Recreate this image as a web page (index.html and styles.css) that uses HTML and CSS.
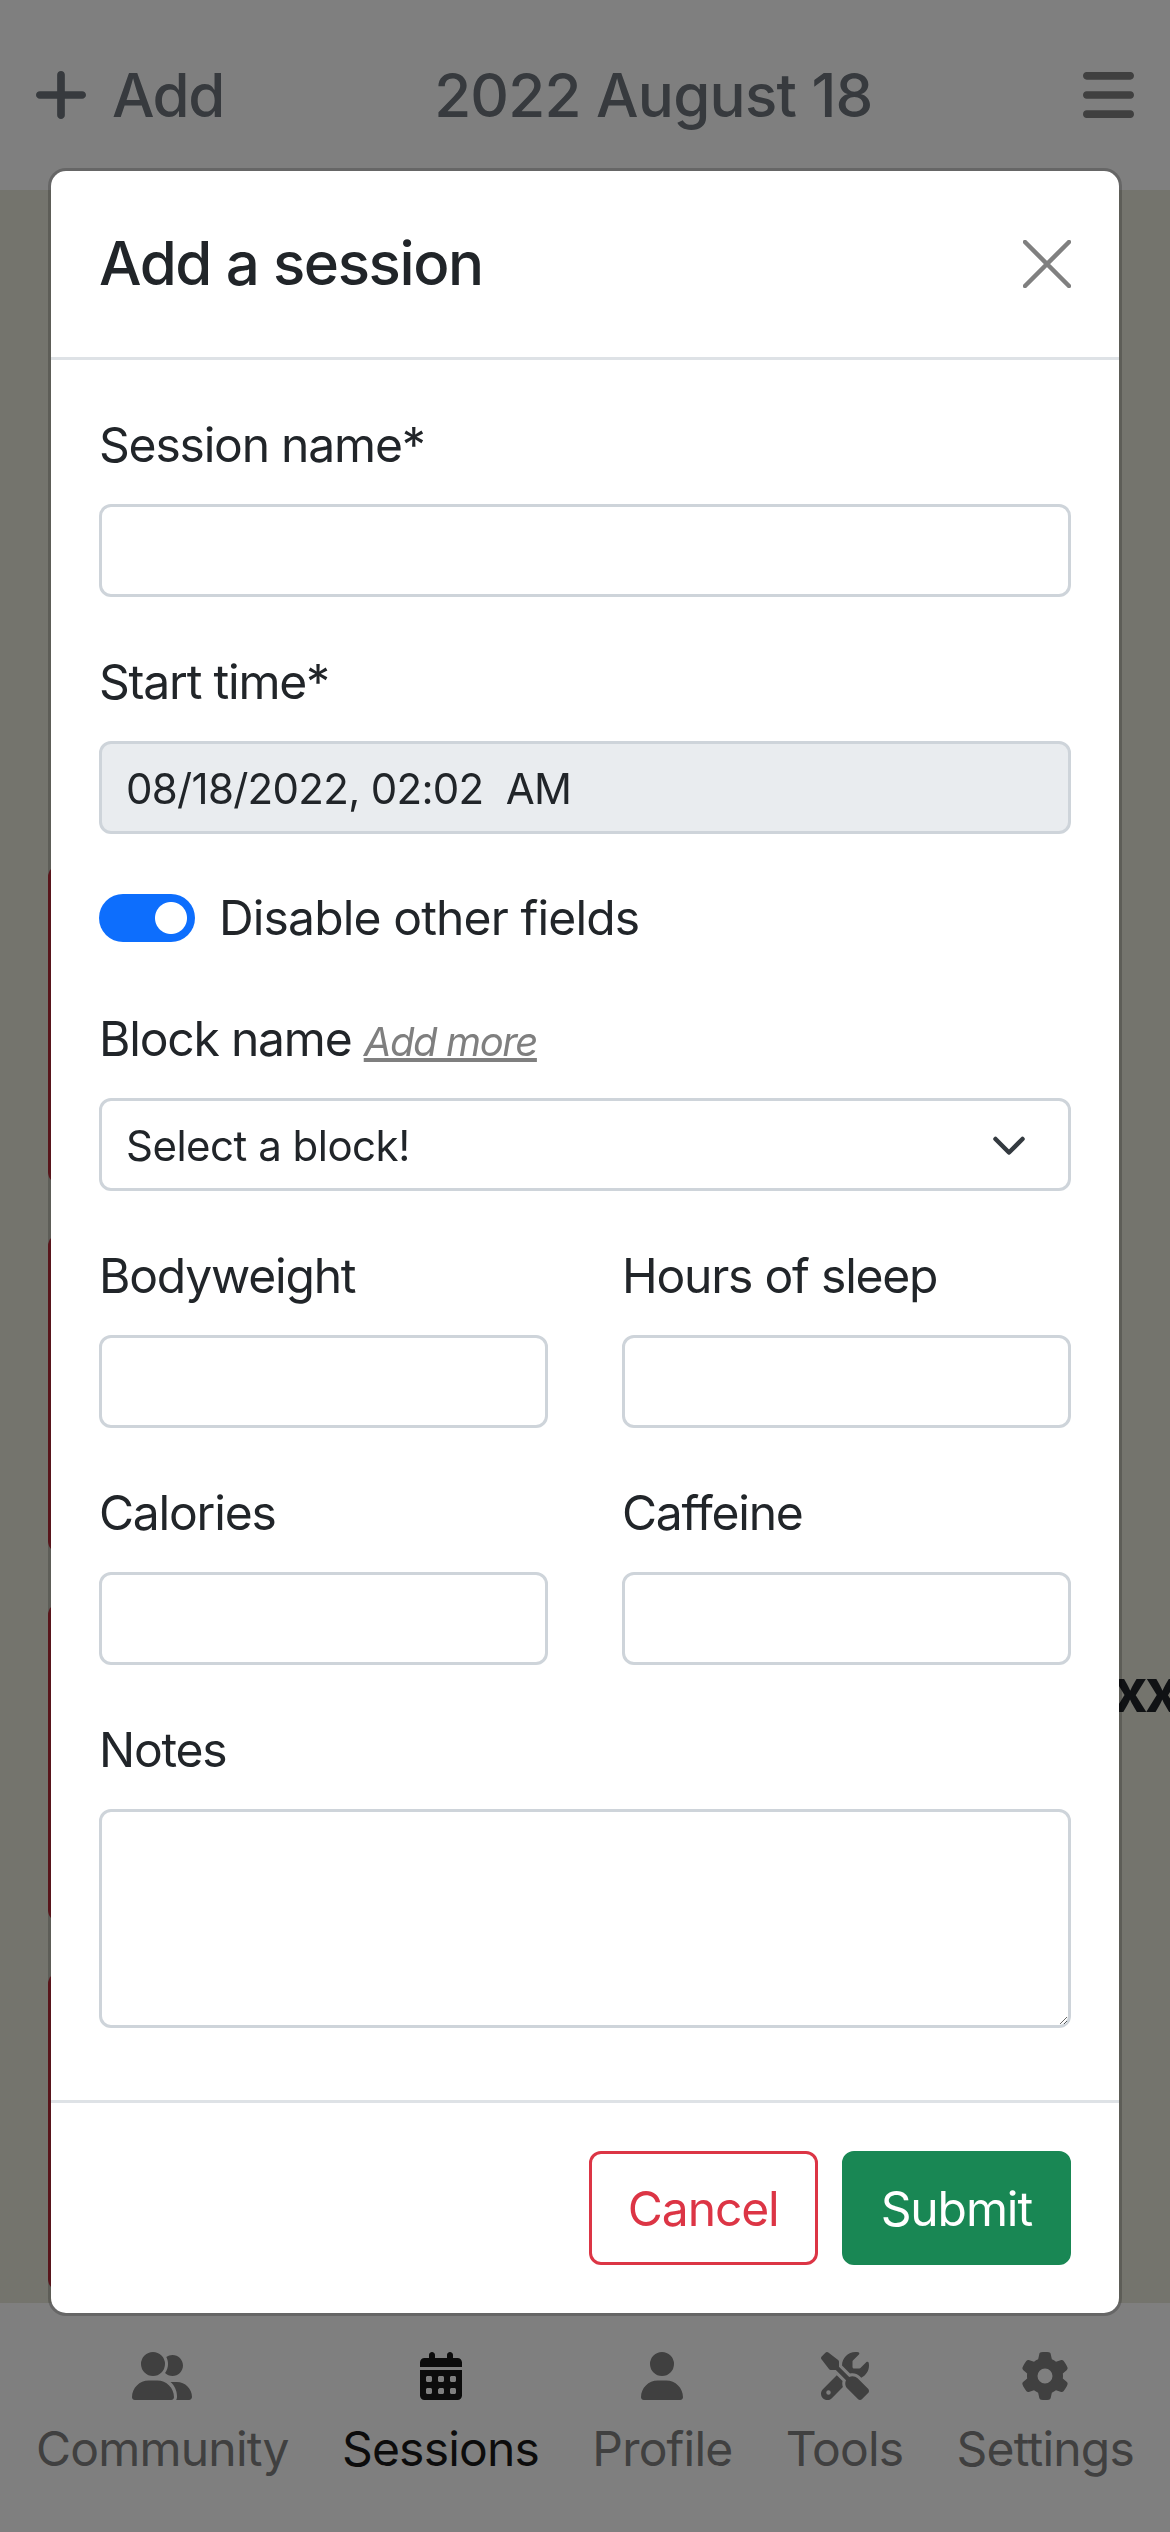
FILE: index.html
```html
<!DOCTYPE html>
<html lang="en">
<head>
<meta charset="utf-8">
<title>Add a session</title>
<link rel="stylesheet" href="styles.css">
</head>
<body>
<div class="app">
  <header class="topbar">
    <div class="add">
      <svg class="add-icon" viewBox="16 48 416 416" preserveAspectRatio="none"><path d="M256 80c0-17.7-14.3-32-32-32s-32 14.3-32 32V224H48c-17.7 0-32 14.3-32 32s14.3 32 32 32H192V432c0 17.7 14.3 32 32 32s32-14.3 32-32V288H400c17.7 0 32-14.3 32-32s-14.3-32-32-32H256V80z"/></svg>
      <span>Add</span>
    </div>
    <div class="date">2022 August 18</div>
    <svg class="menu-icon" viewBox="0 64 448 384" preserveAspectRatio="none"><path d="M0 96C0 78.3 14.3 64 32 64H416c17.7 0 32 14.3 32 32s-14.3 32-32 32H32C14.3 128 0 113.7 0 96zM0 256c0-17.7 14.3-32 32-32H416c17.7 0 32 14.3 32 32s-14.3 32-32 32H32c-17.7 0-32-14.3-32-32zM448 416c0 17.7-14.3 32-32 32H32c-17.7 0-32-14.3-32-32s14.3-32 32-32H416c17.7 0 32 14.3 32 32z"/></svg>
  </header>

  <main class="sessions">
    <article class="card"></article>
    <article class="card"></article>
    <article class="card"><p class="card-title">xxxxxxxxxxxxxxxxxxxxxxxxxxxxxxxxxxxxxxxxxxxxxxxxxx</p></article>
    <article class="card"></article>
  </main>

  <nav class="tabs">
    <div class="tab">
      <svg class="tab-icon" viewBox="0 0 640 512"><path d="M96 128a128 128 0 1 1 256 0A128 128 0 1 1 96 128zM0 482.3C0 383.8 79.8 304 178.3 304h91.4C368.2 304 448 383.8 448 482.3c0 16.4-13.3 29.7-29.7 29.7H29.7C13.3 512 0 498.7 0 482.3zM609.3 512H471.4c5.4-9.4 8.6-20.3 8.6-32v-8c0-60.7-27.1-115.2-69.8-151.8c2.4-.1 4.7-.2 7.1-.2h61.4C567.8 320 640 392.2 640 481.3c0 17-13.8 30.7-30.7 30.7zM432 256c-31 0-59-12.6-79.3-32.9C372.4 196.5 384 163.6 384 128c0-26.8-6.6-52.1-18.3-74.3C384.3 40.1 407.2 32 432 32c61.9 0 112 50.1 112 112s-50.1 112-112 112z"/></svg>
      <span>Community</span>
    </div>
    <div class="tab tab-active">
      <svg class="tab-icon" viewBox="0 0 448 512"><path d="M128 0c17.7 0 32 14.3 32 32V64H288V32c0-17.7 14.3-32 32-32s32 14.3 32 32V64h48c26.5 0 48 21.5 48 48v48H0V112C0 85.5 21.5 64 48 64H96V32c0-17.7 14.3-32 32-32zM0 192H448V464c0 26.5-21.5 48-48 48H48c-26.5 0-48-21.5-48-48V192zm64 80v32c0 8.8 7.2 16 16 16h32c8.8 0 16-7.2 16-16V272c0-8.8-7.2-16-16-16H80c-8.8 0-16 7.2-16 16zm128 0v32c0 8.8 7.2 16 16 16h32c8.8 0 16-7.2 16-16V272c0-8.8-7.2-16-16-16H208c-8.8 0-16 7.2-16 16zm144-16c-8.8 0-16 7.2-16 16v32c0 8.8 7.2 16 16 16h32c8.8 0 16-7.2 16-16V272c0-8.8-7.2-16-16-16H336zM64 400v32c0 8.8 7.2 16 16 16h32c8.8 0 16-7.2 16-16V400c0-8.8-7.2-16-16-16H80c-8.8 0-16 7.2-16 16zm144-16c-8.8 0-16 7.2-16 16v32c0 8.8 7.2 16 16 16h32c8.8 0 16-7.2 16-16V400c0-8.8-7.2-16-16-16H208c-8.8 0-16 7.2-16 16zm112 16v32c0 8.8 7.2 16 16 16h32c8.8 0 16-7.2 16-16V400c0-8.8-7.2-16-16-16H336c-8.8 0-16 7.2-16 16z"/></svg>
      <span>Sessions</span>
    </div>
    <div class="tab">
      <svg class="tab-icon" viewBox="0 0 448 512"><path d="M224 256A128 128 0 1 0 224 0a128 128 0 1 0 0 256zm-45.7 48C79.8 304 0 383.8 0 482.3C0 498.7 13.3 512 29.7 512H418.3c16.4 0 29.7-13.3 29.7-29.7C448 383.8 368.2 304 269.7 304H178.3z"/></svg>
      <span>Profile</span>
    </div>
    <div class="tab">
      <svg class="tab-icon" viewBox="0 0 512 512"><path d="M78.6 5C69.1-2.4 55.6-1.5 47 7L7 47c-8.5 8.5-9.4 22-2.1 31.6l80 104c4.5 5.9 11.6 9.4 19 9.4h54.1l109 109c-14.7 29-10 65.4 14.3 89.6l112 112c12.5 12.5 32.8 12.5 45.3 0l64-64c12.5-12.5 12.5-32.8 0-45.3l-112-112c-24.2-24.2-60.6-29-89.6-14.3l-109-109V104c0-7.5-3.5-14.5-9.4-19L78.6 5zM19.9 396.1C7.2 408.8 0 426.1 0 444.1C0 481.6 30.4 512 67.9 512c18 0 35.3-7.2 48-19.9L233.7 374.3c-7.8-20.9-9-43.6-3.6-65.1l-61.7-61.7L19.9 396.1zM512 144c0-10.5-1.1-20.7-3.2-30.5c-2.4-11.2-16.1-14.1-24.2-6l-63.9 63.9c-3 3-7.1 4.7-11.3 4.7H352c-8.8 0-16-7.2-16-16V102.6c0-4.2 1.7-8.3 4.7-11.3l63.9-63.9c8.1-8.1 5.2-21.8-6-24.2C388.7 1.1 378.5 0 368 0C288.5 0 224 64.5 224 144l0 .8 85.3 85.3c36-9.1 75.8 .5 104 28.7L429 274.5c49-23 83-72.8 83-130.5zM56 432a24 24 0 1 1 48 0 24 24 0 1 1 -48 0z"/></svg>
      <span>Tools</span>
    </div>
    <div class="tab">
      <svg class="tab-icon" viewBox="0 0 512 512"><path d="M495.9 166.6c3.2 8.7 .5 18.4-6.4 24.6l-43.3 39.4c1.1 8.3 1.7 16.8 1.7 25.4s-.6 17.1-1.7 25.4l43.3 39.4c6.9 6.2 9.6 15.9 6.4 24.6c-4.4 11.9-9.7 23.3-15.8 34.3l-4.7 8.1c-6.6 11-14 21.4-22.1 31.2c-5.9 7.2-15.7 9.6-24.5 6.8l-55.7-17.7c-13.4 10.3-28.2 18.9-44 25.4l-12.5 57.1c-2 9.1-9 16.3-18.2 17.8c-13.8 2.3-28 3.5-42.5 3.5s-28.7-1.2-42.5-3.5c-9.2-1.5-16.2-8.7-18.2-17.8l-12.5-57.1c-15.8-6.5-30.6-15.1-44-25.4L83.1 425.9c-8.8 2.8-18.6 .3-24.5-6.8c-8.1-9.8-15.5-20.2-22.1-31.2l-4.7-8.1c-6.1-11-11.4-22.4-15.8-34.3c-3.2-8.7-.5-18.4 6.4-24.6l43.3-39.4C64.6 273.1 64 264.6 64 256s.6-17.1 1.7-25.4L22.4 191.2c-6.9-6.2-9.6-15.9-6.4-24.6c4.4-11.9 9.7-23.3 15.8-34.3l4.7-8.1c6.6-11 14-21.4 22.1-31.2c5.9-7.2 15.7-9.6 24.5-6.8l55.7 17.7c13.4-10.3 28.2-18.9 44-25.4l12.5-57.1c2-9.1 9-16.3 18.2-17.8C227.3 1.2 241.5 0 256 0s28.7 1.2 42.5 3.5c9.2 1.5 16.2 8.7 18.2 17.8l12.5 57.1c15.8 6.5 30.6 15.1 44 25.4l55.7-17.7c8.8-2.8 18.6-.3 24.5 6.8c8.1 9.8 15.5 20.2 22.1 31.2l4.7 8.1c6.1 11 11.4 22.4 15.8 34.3zM256 336a80 80 0 1 0 0-160 80 80 0 1 0 0 160z"/></svg>
      <span>Settings</span>
    </div>
  </nav>
</div>

<div class="backdrop">
  <form class="modal">
    <div class="modal-header">
      <h5 class="modal-title">Add a session</h5>
      <svg class="close" viewBox="0 0 48 48"><path d="M2 2 46 46M46 2 2 46"/></svg>
    </div>
    <div class="modal-body">
      <div class="group">
        <label class="label">Session name*</label>
        <input class="control" type="text">
      </div>
      <div class="group">
        <label class="label">Start time*</label>
        <input class="control control-locked" type="text" readonly value="08/18/2022, 02:02  AM">
      </div>
      <div class="switch-row">
        <input class="switch" type="checkbox" checked>
        <label class="switch-label">Disable other fields</label>
      </div>
      <div class="group">
        <label class="label">Block name <a class="add-more">Add more</a></label>
        <div class="select-wrap">
          <select class="control select"><option>Select a block!</option></select>
          <svg class="chevron" viewBox="0 0 32 20"><path d="M2.5 3 16 16.500 29.500 3"/></svg>
        </div>
      </div>
      <div class="pair">
        <div class="group">
          <label class="label">Bodyweight</label>
          <input class="control" type="text">
        </div>
        <div class="group">
          <label class="label">Hours of sleep</label>
          <input class="control" type="text">
        </div>
      </div>
      <div class="pair">
        <div class="group">
          <label class="label">Calories</label>
          <input class="control" type="text">
        </div>
        <div class="group">
          <label class="label">Caffeine</label>
          <input class="control" type="text">
        </div>
      </div>
      <div class="group">
        <label class="label">Notes</label>
        <textarea class="control notes"></textarea>
      </div>
    </div>
    <div class="modal-footer">
      <button class="btn btn-cancel" type="button">Cancel</button>
      <button class="btn btn-submit" type="button">Submit</button>
    </div>
  </form>
</div>
</body>
</html>
```

FILE: styles.css
```css
* { box-sizing: border-box; }

html, body {
  margin: 0;
  height: 100%;
  overflow: hidden;
}

body {
  font-family: Inter, "Liberation Sans", sans-serif;
  color: #212529;
  background: #e8e8da;
}

.app {
  height: 2532px;
  display: flex;
  flex-direction: column;
  overflow: hidden;
}

.topbar {
  height: 190px;
  flex: none;
  display: flex;
  align-items: center;
  justify-content: space-between;
  padding: 0 36px;
  background: #fff;
  color: #6e757c;
  font-size: 60px;
  font-weight: 500;
  letter-spacing: -0.75px;
}

.add {
  display: flex;
  align-items: center;
  gap: 26px;
  letter-spacing: -1.500px;
}

.add-icon {
  width: 50px;
  height: 48px;
  fill: #6e757c;
}

.menu-icon {
  width: 51px;
  height: 46px;
  fill: #808080;
}

.sessions {
  flex: 1;
  min-height: 0;
  display: flex;
  flex-direction: column;
  gap: 50px;
  padding: 675px 0 0 48px;
}

.card {
  flex: none;
  width: 1074px;
  height: 319px;
  border-left: 6px solid #dc3545;
  border-radius: 12px;
}

.card-title {
  margin: 0;
  padding: 51px 0 0 25px;
  font-size: 60px;
  line-height: 72px;
  font-weight: 700;
  white-space: nowrap;
  letter-spacing: -2.5px;
}

.tabs {
  height: 229px;
  flex: none;
  display: flex;
  justify-content: space-between;
  padding: 49px 36px 0;
  background: #fff;
  color: #808080;
  font-size: 48px;
  line-height: 72px;
  letter-spacing: -0.800px;
}

.tab {
  display: flex;
  flex-direction: column;
  align-items: center;
  gap: 13px;
}

.tab-active {
  color: #191919;
}

.tab-icon {
  height: 48px;
  fill: currentColor;
  display: block;
}

.backdrop {
  position: fixed;
  inset: 0;
  background: rgba(0, 0, 0, 0.5);
  padding: 168px 48px 0;
}

.modal {
  background: #fff;
  background-clip: padding-box;
  border: 3px solid rgba(0, 0, 0, 0.2);
  border-radius: 18px;
}

.modal-header {
  display: flex;
  align-items: center;
  justify-content: space-between;
  padding: 48px;
  border-bottom: 3px solid #dee2e6;
  height: 189px;
}

.modal-title {
  margin: -3px 0 0;
  font-size: 60px;
  line-height: 90px;
  font-weight: 500;
  letter-spacing: -1.400px;
}

.close {
  width: 48px;
  height: 48px;
  fill: none;
  stroke: #808080;
  stroke-width: 4.500;
  stroke-linecap: round;
}

.modal-body {
  padding: 48px 48px 24px;
}

.group {
  margin-bottom: 48px;
  min-width: 0;
}

.label {
  display: block;
  height: 73px;
  padding-top: 1px;
  font-size: 48px;
  line-height: 72px;
  margin-bottom: 23px;
  letter-spacing: -1.200px;
  white-space: nowrap;
}

.control {
  display: block;
  width: 100%;
  height: 93px;
  padding: 2px 24px 0;
  font-family: inherit;
  font-size: 42px;
  letter-spacing: -0.500px;
  color: #212529;
  background: #fff;
  border: 3px solid #ced4da;
  border-radius: 12px;
  outline: none;
}

.control-locked {
  background: #e9ecef;
  letter-spacing: -0.700px;
}

.switch-row {
  height: 72px;
  display: flex;
  align-items: center;
  gap: 24px;
  margin-bottom: 48px;
}

.switch {
  appearance: none;
  margin: 0;
  width: 96px;
  height: 48px;
  border-radius: 24px;
  background: radial-gradient(circle at 72px 24px, #fff 15.500px, #0d6efd 16.500px);
}

.switch-label {
  font-size: 48px;
  line-height: 72px;
  letter-spacing: -0.850px;
}

.add-more {
  font-size: 40px;
  line-height: 1;
  font-style: italic;
  letter-spacing: -1.400px;
  color: #7f7f7f;
  text-decoration: underline;
}

.select-wrap {
  position: relative;
}

.select {
  appearance: none;
}

.chevron {
  position: absolute;
  right: 46px;
  top: 38px;
  width: 32px;
  height: 20px;
  fill: none;
  stroke: #343a40;
  stroke-width: 4.500px;
  stroke-linecap: round;
  stroke-linejoin: round;
}

.pair {
  display: grid;
  grid-template-columns: 449px 449px;
  justify-content: space-between;
}

.notes {
  height: 219px;
  padding: 18px 24px;
  resize: vertical;
}

.modal-footer {
  display: flex;
  justify-content: flex-end;
  gap: 24px;
  padding: 48px;
  border-top: 3px solid #dee2e6;
}

.btn {
  height: 114px;
  padding: 0 36px;
  font-family: inherit;
  font-size: 48px;
  letter-spacing: -1.100px;
  border-radius: 12px;
  border: 3px solid transparent;
}

.btn-cancel {
  background: #fff;
  color: #dc3545;
  border-color: #dc3545;
}

.btn-submit {
  background: #198754;
  color: #fff;
  border-color: #198754;
}
```
